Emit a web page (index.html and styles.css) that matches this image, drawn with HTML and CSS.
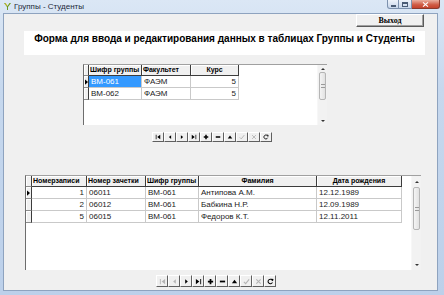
FILE: index.html
```html
<!DOCTYPE html>
<html lang="ru">
<head>
<meta charset="utf-8">
<title>Группы - Студенты</title>
<link rel="stylesheet" href="styles.css">
</head>
<body>
<div class="window">
  <div class="titlebar">
    <svg class="app-icon" viewBox="0 0 9 9"><path d="M1 1 L4 5 L4 8 L5 8 L5 5 L8 1 L6.5 1 L4.5 4 L2.5 1z" fill="#6c9a1f"/><path d="M1.5 1.5 L3 1.5 L4.5 3.5 L4 4z" fill="#e3c53a"/></svg>
    <span class="title">Группы - Студенты</span>
    <div class="caption">
      <span class="cb cb-min"><span class="min-glyph"></span></span>
      <span class="cb cb-max"><span class="max-glyph"></span></span>
      <span class="cb cb-close"><svg viewBox="0 0 8 6" class="close-glyph"><path d="M1 0.5 L7 5.5 M7 0.5 L1 5.5" stroke="#fff" stroke-width="1.4"/></svg></span>
    </div>
  </div>
  <div class="client">
    <div class="toolbar"><button class="exit-btn">Выход</button></div>
    <div class="heading">Форма для ввода и редактирования данных в таблицах Группы и Студенты</div>

    <div class="grid grid-groups">
      <div class="grid-body">
        <div class="row head">
          <div class="cell ind"></div>
          <div class="cell g1"><span>Шифр группы</span></div>
          <div class="cell g2">Факультет</div>
          <div class="cell g3 center">Курс</div>
        </div>
        <div class="row">
          <div class="cell ind"><svg class="cur" viewBox="0 0 4 7"><path d="M0 0 L4 3.5 L0 7z" fill="#000"/></svg></div>
          <div class="cell g1 selected">ВМ-061</div>
          <div class="cell g2">ФАЭМ</div>
          <div class="cell g3 right">5</div>
        </div>
        <div class="row">
          <div class="cell ind"></div>
          <div class="cell g1">ВМ-062</div>
          <div class="cell g2">ФАЭМ</div>
          <div class="cell g3 right">5</div>
        </div>
      </div>
      <div class="scrollbar sb-groups">
        <div class="sb-arrow up"><svg viewBox="0 0 4 2"><path d="M0 2 L2 0 L4 2z" fill="#333"/></svg></div>
        <div class="sb-thumb"><span class="grip"></span></div>
        <div class="sb-track"></div>
        <div class="sb-arrow down"><svg viewBox="0 0 4 2"><path d="M0 0 L2 2 L4 0z" fill="#333"/></svg></div>
      </div>
    </div>

    <div class="nav nav-groups">
      <span class="nav-btn"><svg viewBox="0 0 8 8"><path d="M1 1h1v6H1z M7 1 L3 4 L7 7z"/></svg></span>
      <span class="nav-btn"><svg viewBox="0 0 8 8"><path d="M5.5 1.5 L2.5 4 L5.5 6.5z"/></svg></span>
      <span class="nav-btn"><svg viewBox="0 0 8 8"><path d="M2.5 1.5 L5.5 4 L2.5 6.5z"/></svg></span>
      <span class="nav-btn"><svg viewBox="0 0 8 8"><path d="M1 1 L5 4 L1 7z M6 1h1v6H6z"/></svg></span>
      <span class="nav-btn"><svg viewBox="0 0 8 8"><path d="M3 1h2v2h2v2H5v2H3V5H1V3h2z"/></svg></span>
      <span class="nav-btn"><svg viewBox="0 0 8 8"><path d="M1 3h6v2H1z"/></svg></span>
      <span class="nav-btn"><svg viewBox="0 0 8 8"><path d="M4 2 L7 6 H1z"/></svg></span>
      <span class="nav-btn off"><svg viewBox="0 0 8 8"><path d="M1 4.5 L3 6.5 L7 1.5" fill="none" stroke-width="1.2"/></svg></span>
      <span class="nav-btn off"><svg viewBox="0 0 8 8"><path d="M1.5 1.5 L6.5 6.5 M6.5 1.5 L1.5 6.5" fill="none" stroke-width="1.2"/></svg></span>
      <span class="nav-btn"><svg viewBox="0 0 8 8"><path d="M6.3 3.2 A2.6 2.6 0 1 0 6.2 5" fill="none" stroke-width="1.4"/><path d="M5 0.8 L7.4 1.2 L6.8 3.8z"/></svg></span>
    </div>

    <div class="grid grid-students">
      <div class="grid-body">
        <div class="row head">
          <div class="cell ind"></div>
          <div class="cell s1">Номерзаписи</div>
          <div class="cell s2">Номер зачетки</div>
          <div class="cell s3">Шифр группы</div>
          <div class="cell s4 center">Фамилия</div>
          <div class="cell s5 center">Дата рождения</div>
        </div>
        <div class="row">
          <div class="cell ind"><svg class="cur" viewBox="0 0 4 7"><path d="M0 0 L4 3.5 L0 7z" fill="#000"/></svg></div>
          <div class="cell s1 right">1</div>
          <div class="cell s2">06011</div>
          <div class="cell s3">ВМ-061</div>
          <div class="cell s4">Антипова А.М.</div>
          <div class="cell s5">12.12.1989</div>
        </div>
        <div class="row">
          <div class="cell ind"></div>
          <div class="cell s1 right">2</div>
          <div class="cell s2">06012</div>
          <div class="cell s3">ВМ-061</div>
          <div class="cell s4">Бабкина Н.Р.</div>
          <div class="cell s5">12.09.1989</div>
        </div>
        <div class="row">
          <div class="cell ind"></div>
          <div class="cell s1 right">5</div>
          <div class="cell s2">06015</div>
          <div class="cell s3">ВМ-061</div>
          <div class="cell s4">Федоров К.Т.</div>
          <div class="cell s5">12.11.2011</div>
        </div>
      </div>
      <div class="scrollbar sb-students">
        <div class="sb-arrow up"><svg viewBox="0 0 4 2"><path d="M0 2 L2 0 L4 2z" fill="#333"/></svg></div>
        <div class="sb-thumb"><span class="grip"></span></div>
        <div class="sb-track"></div>
        <div class="sb-arrow down"><svg viewBox="0 0 4 2"><path d="M0 0 L2 2 L4 0z" fill="#333"/></svg></div>
      </div>
    </div>

    <div class="nav nav-students">
      <span class="nav-btn off"><svg viewBox="0 0 8 8"><path d="M1 1h1v6H1z M7 1 L3 4 L7 7z"/></svg></span>
      <span class="nav-btn off"><svg viewBox="0 0 8 8"><path d="M5.5 1.5 L2.5 4 L5.5 6.5z"/></svg></span>
      <span class="nav-btn"><svg viewBox="0 0 8 8"><path d="M2.5 1.5 L5.5 4 L2.5 6.5z"/></svg></span>
      <span class="nav-btn"><svg viewBox="0 0 8 8"><path d="M1 1 L5 4 L1 7z M6 1h1v6H6z"/></svg></span>
      <span class="nav-btn"><svg viewBox="0 0 8 8"><path d="M3 1h2v2h2v2H5v2H3V5H1V3h2z"/></svg></span>
      <span class="nav-btn"><svg viewBox="0 0 8 8"><path d="M1 3h6v2H1z"/></svg></span>
      <span class="nav-btn"><svg viewBox="0 0 8 8"><path d="M4 2 L7 6 H1z"/></svg></span>
      <span class="nav-btn off"><svg viewBox="0 0 8 8"><path d="M1 4.5 L3 6.5 L7 1.5" fill="none" stroke-width="1.2"/></svg></span>
      <span class="nav-btn off"><svg viewBox="0 0 8 8"><path d="M1.5 1.5 L6.5 6.5 M6.5 1.5 L1.5 6.5" fill="none" stroke-width="1.2"/></svg></span>
      <span class="nav-btn"><svg viewBox="0 0 8 8"><path d="M6.3 3.2 A2.6 2.6 0 1 0 6.2 5" fill="none" stroke-width="1.4"/><path d="M5 0.8 L7.4 1.2 L6.8 3.8z"/></svg></span>
    </div>
  </div>
</div>
</body>
</html>
```

FILE: styles.css
```css
* { box-sizing: border-box; }
html, body { margin: 0; padding: 0; }
body {
  width: 444px;
  height: 295px;
  overflow: hidden;
  font-family: "Liberation Sans", Arial, sans-serif;
  background: #c9dbf0;
}
.window {
  width: 444px;
  height: 295px;
  display: flex;
  flex-direction: column;
  background: linear-gradient(180deg, #dbe7f5 0%, #c6d8ee 30%, #bcd0ea 100%);
}
.titlebar {
  height: 13px;
  display: flex;
  align-items: center;
  padding-left: 3px;
  flex: none;
}
.app-icon { width: 9px; height: 9px; margin-right: 2px; }
.title { font-size: 8px; color: #1d2a3b; line-height: 9px; }
.caption {
  margin-left: auto;
  margin-right: 4px;
  align-self: flex-start;
  display: flex;
}
.cb {
  height: 9px;
  border: 1px solid #7d92ae;
  border-top: none;
  background: linear-gradient(180deg, #eef3fa, #c7d6ea);
  display: flex;
  align-items: center;
  justify-content: center;
}
.cb-min { width: 12px; border-radius: 0 0 0 3px; }
.cb-max { width: 13px; border-left: none; }
.cb-close {
  width: 28px;
  border-left: none;
  border-color: #8a3a2c;
  border-radius: 0 0 3px 0;
  background: linear-gradient(180deg, #eab0a0, #cf5a43 60%, #c4432d);
}
.min-glyph { width: 5px; height: 2px; background: #4a5c75; margin-top: 3px; }
.max-glyph { width: 6px; height: 5px; border: 1px solid #4a5c75; border-top-width: 2px; }
.close-glyph { width: 7px; height: 5px; }

.client {
  flex: 1;
  margin: 0 6px 4px 3px;
  border: 1px solid #8ea3bf;
  background: #f0f0f0;
  display: flex;
  flex-direction: column;
}
.toolbar {
  display: flex;
  justify-content: flex-end;
  padding-right: 13px;
}
.exit-btn {
  width: 68px;
  height: 13px;
  margin: 0;
  padding: 0;
  font: bold 8px "Liberation Serif", "Times New Roman", serif;
  color: #000;
  background: #f0f0f0;
  border: 1px solid;
  border-color: #ffffff #5a5a5a #5a5a5a #ffffff;
  box-shadow: inset -1px -1px #a0a0a0;
}
.heading {
  margin: 4px 0 0 20px;
  width: 401px;
  height: 24px;
  background: #fff;
  font-weight: bold;
  font-size: 10px;
  line-height: 12px;
  padding-top: 2px;
  text-align: center;
  color: #000;
  white-space: nowrap;
}

.grid {
  display: flex;
  background: #fff;
  border-top: 1px solid #a0a0a0;
  border-left: 1px solid #6d6d6d;
}
.grid-groups { margin: 9px 0 0 79px; width: 244px; height: 61px; }
.grid-students { margin: 33px 0 0 21px; width: 396px; height: 95px; }
.grid-body { flex: 1; }
.row { display: flex; height: 12px; }
.row.head { height: 11px; }
.cell {
  flex: none;
  height: 100%;
  border-right: 1px solid #c9c9c9;
  border-bottom: 1px solid #c9c9c9;
  font-size: 8px;
  line-height: 11px;
  padding: 0 2px;
  white-space: nowrap;
  overflow: hidden;
  color: #1b1b1b;
}
.head .cell {
  background: #f0f0f0;
  font-weight: bold;
  font-size: 7px;
  line-height: 10px;
  padding: 0 1px;
  color: #000;
  border-right-color: #3c3c3c;
  border-bottom-color: #3c3c3c;
  box-shadow: inset 1px 1px #fff;
}
.cell.ind {
  background: #f0f0f0;
  padding: 0;
  border-right-color: #3c3c3c;
  border-bottom-color: #8c8c8c;
  box-shadow: inset 1px 1px #fff;
  display: flex;
  align-items: center;
  justify-content: center;
}
.cur { width: 3px; height: 6px; }
.center { text-align: center; }
.right { text-align: right; }
.selected { background: #3399ff; color: #fff; }

.grid-groups .ind { width: 5px; }
.g1 { width: 53px; }
.g2 { width: 49px; }
.g3 { width: 48px; }

.grid-students .ind { width: 6px; }
.s1 { width: 55px; }
.s2 { width: 59px; }
.s3 { width: 53px; }
.s4 { width: 118px; }
.s5 { width: 85px; }

.scrollbar {
  width: 10px;
  display: flex;
  flex-direction: column;
  background: #f2f2f2;
  border-left: 1px solid #f7f7f7;
}
.sb-arrow {
  display: flex;
  align-items: center;
  justify-content: center;
  flex: none;
}
.sb-arrow svg { width: 4px; height: 2px; }
.sb-track { flex: 1; }
.sb-thumb {
  flex: none;
  margin: 0 1px;
  background: linear-gradient(90deg, #f4f4f4, #e2e2e2);
  border: 1px solid #b5b5b5;
  border-radius: 2px;
  display: flex;
  align-items: center;
  justify-content: center;
}
.grip { width: 4px; height: 4px; border-top: 1px solid #9a9a9a; border-bottom: 1px solid #9a9a9a; }
.sb-groups .up { height: 7px; }
.sb-groups .sb-thumb { height: 28px; }
.sb-groups .down { height: 8px; }
.sb-students .up { height: 11px; }
.sb-students .sb-thumb { height: 43px; }
.sb-students .down { height: 10px; }

.nav {
  display: flex;
  flex: none;
}
.nav-groups { margin: 7px 0 0 148px; height: 10px; }
.nav-students { margin: 5px 0 0 152px; height: 12px; }
.nav-btn {
  width: 12px;
  height: 100%;
  background: #f0f0f0;
  border: 1px solid;
  border-color: #ffffff #5f5f5f #5f5f5f #ffffff;
  display: flex;
  align-items: center;
  justify-content: center;
}
.nav-btn svg { width: 6px; height: 6px; fill: #000; stroke: #000; stroke-width: 0; }
.nav-btn svg path[fill="none"] { stroke-width: 1.2; }
.nav-students .nav-btn svg { width: 7px; height: 7px; }
.nav-btn.off svg { fill: #b4b4b4; stroke: #b4b4b4; }
```
